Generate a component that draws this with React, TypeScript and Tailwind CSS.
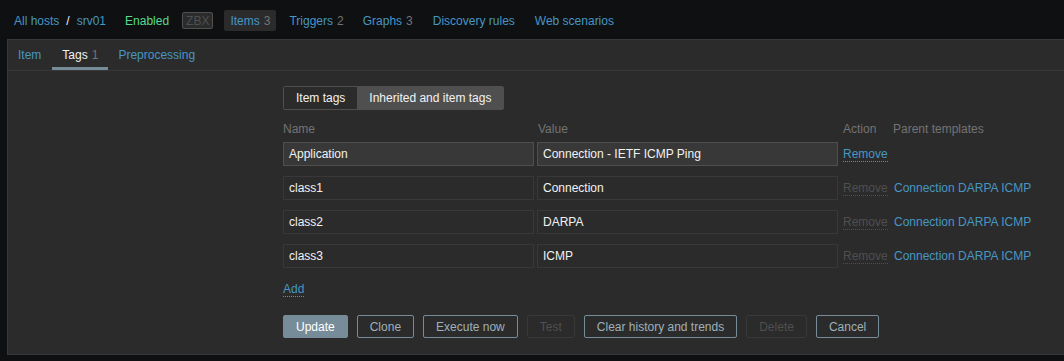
import React from "react";

const link = "text-[#4796c4]";

function Input({ value, editable }: { value: string; editable?: boolean }) {
  return (
    <div
      className={`h-[24px] flex items-center px-[5px] border text-[#f2f2f2] ${
        editable ? "bg-[#383838] border-[#4f4f4f]" : "bg-[#2b2b2b] border-[#383838]"
      }`}
    >
      {value}
    </div>
  );
}

function Btn({ label, kind }: { label: string; kind: "main" | "alt" | "disabled" }) {
  const cls =
    kind === "main"
      ? "bg-[#768d99] border-[#768d99] text-white"
      : kind === "alt"
      ? "border-[#768d99] text-[#9fb0ba]"
      : "border-[#383838] text-[#4f4f4f]";
  return (
    <div className={`h-[23px] px-[12px] border rounded-[2px] flex items-center justify-center ${cls}`}>
      {label}
    </div>
  );
}

export default function App() {
  const rows = [
    { n: "Application", v: "Connection - IETF ICMP Ping", editable: true, parent: "" },
    { n: "class1", v: "Connection", editable: false, parent: "Connection DARPA ICMP" },
    { n: "class2", v: "DARPA", editable: false, parent: "Connection DARPA ICMP" },
    { n: "class3", v: "ICMP", editable: false, parent: "Connection DARPA ICMP" },
  ];
  return (
    <div
      className="w-[1064px] h-[361px] bg-[#0e1012] text-[12px] leading-[14px] overflow-hidden"
      style={{ fontFamily: '"Liberation Sans", Arial, sans-serif' }}
    >
      {/* top nav */}
      <div className="h-[39px] flex items-center pl-[14px] pt-[2px]">
        <span className={link}>All hosts</span>
        <span className="text-[#f2f2f2] mx-[7px]">/</span>
        <span className={link}>srv01</span>
        <span className="text-[#59db8f] ml-[19px]">Enabled</span>
        <span className="ml-[13px] h-[17px] px-[3px] border border-[#4f4f4f] bg-[#2b2b2b] text-[#4f4f4f] flex items-center text-[12px] rounded-[2px]">
          ZBX
        </span>
        <span className="ml-[11px] h-[21px] px-[6px] bg-[#2b2b2b] rounded-[2px] flex items-center">
          <span className={link}>Items</span>
          <span className="text-[#737373] ml-[4px]">3</span>
        </span>
        <span className="ml-[13px]">
          <span className={link}>Triggers</span>
          <span className="text-[#737373] ml-[4px]">2</span>
        </span>
        <span className="ml-[19px]">
          <span className={link}>Graphs</span>
          <span className="text-[#737373] ml-[4px]">3</span>
        </span>
        <span className={`${link} ml-[20px]`}>Discovery rules</span>
        <span className={`${link} ml-[20px]`}>Web scenarios</span>
      </div>

      {/* panel */}
      <div className="ml-[7px] h-[316px] bg-[#2b2b2b] border-l border-t border-b border-[#383838]">
        <div className="h-[31px] flex items-stretch border-b border-[#383838] pl-[10px]">
          <div className="flex items-center">
            <span className={link}>Item</span>
          </div>
          <div className="ml-[11px] px-[10px] flex items-center border-b-[3px] border-[#768d99] pt-[3px]">
            <span className="text-[#f2f2f2]">Tags</span>
            <span className="text-[#737373] ml-[4px]">1</span>
          </div>
          <div className="ml-[10px] flex items-center">
            <span className={link}>Preprocessing</span>
          </div>
        </div>

        <div className="pl-[275px] pt-[15px]">
          <div className="flex w-max border border-[#4f4f4f] h-[24px] rounded-[2px]">
            <div className="px-[12px] flex items-center text-[#f2f2f2] bg-[#2b2b2b]">Item tags</div>
            <div className="px-[12px] flex items-center text-[#f2f2f2] bg-[#4f4f4f]">Inherited and item tags</div>
          </div>

          <div className="flex mt-[12px] text-[#737373] h-[14px]">
            <div className="w-[255px]">Name</div>
            <div className="w-[305px]">Value</div>
            <div className="w-[50px]">Action</div>
            <div>Parent templates</div>
          </div>

          <div className="mt-[6px] flex flex-col gap-[10px]">
            {rows.map((r) => (
              <div key={r.n} className="flex items-center">
                <div className="w-[251px]">
                  <Input value={r.n} editable={r.editable} />
                </div>
                <div className="w-[301px] ml-[3px]">
                  <Input value={r.v} editable={r.editable} />
                </div>
                <div className="ml-[5px] w-[51px]">
                  <span
                    className={`border-b border-dotted ${
                      r.editable ? "text-[#4796c4] border-[#4796c4]" : "text-[#4f4f4f] border-[#4f4f4f]"
                    }`}
                  >
                    Remove
                  </span>
                </div>
                <div className={link}>{r.parent}</div>
              </div>
            ))}
          </div>

          <div className="mt-[14px] h-[18px]">
            <span className="text-[#4796c4] border-b border-dotted border-[#4796c4]">Add</span>
          </div>

          <div className="mt-[15px] flex gap-[9px]">
            <Btn label="Update" kind="main" />
            <Btn label="Clone" kind="alt" />
            <Btn label="Execute now" kind="alt" />
            <Btn label="Test" kind="disabled" />
            <Btn label="Clear history and trends" kind="alt" />
            <Btn label="Delete" kind="disabled" />
            <Btn label="Cancel" kind="alt" />
          </div>
        </div>
      </div>
    </div>
  );
}
